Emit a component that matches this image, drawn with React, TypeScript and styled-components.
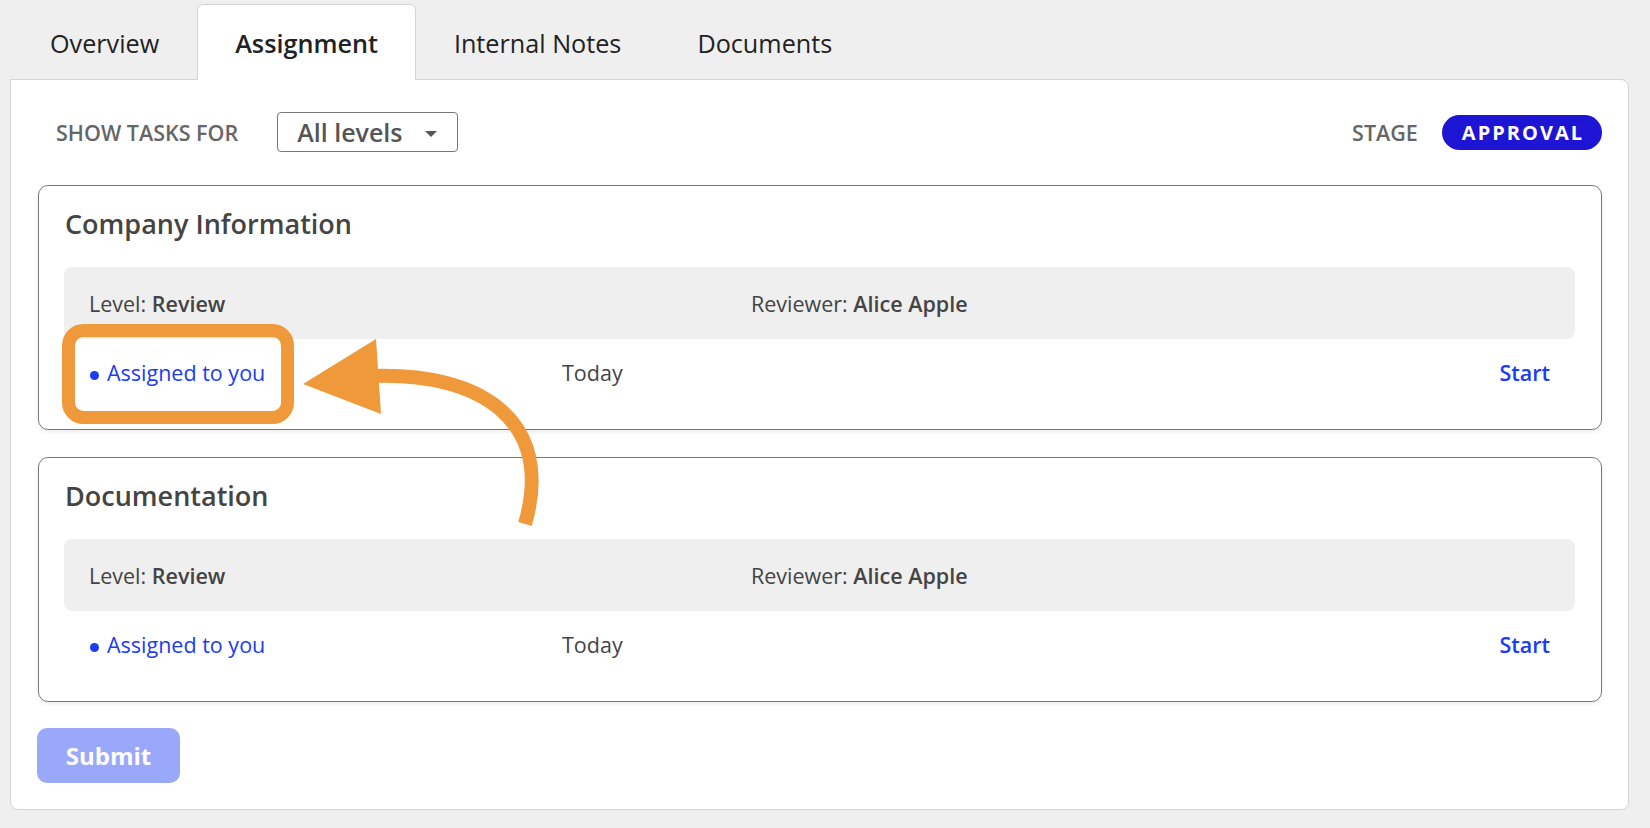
import React from "react";
import styled, { createGlobalStyle } from "styled-components";

const Global = createGlobalStyle`
  html, body { margin: 0; padding: 0; background: #efefef; }
  body { font-family: "Open Sans", "Noto Sans", sans-serif; color: #444; }
  * { box-sizing: border-box; }
`;

const Page = styled.div`
  position: relative;
  width: 1650px;
  height: 828px;
  padding: 4px 21px 19px 10px;
  display: flex;
  flex-direction: column;
`;

const TabBar = styled.div`
  display: flex;
  padding-left: 2px;
  margin-bottom: -1px;
  position: relative;
  z-index: 1;
`;

const Tab = styled.div<{ $active?: boolean }>`
  height: 76px;
  padding: 0 37px;
  display: flex;
  align-items: center;
  font-size: 25.2px;
  color: #222;
  font-weight: ${(p) => (p.$active ? 600 : 400)};
  background: ${(p) => (p.$active ? "#fff" : "transparent")};
  border: 1px solid ${(p) => (p.$active ? "#d4d4d4" : "transparent")};
  border-bottom: none;
  border-radius: 6px 6px 0 0;
`;

const Panel = styled.div`
  background: #fff;
  border: 1px solid #d4d4d4;
  border-radius: 0 8px 8px 8px;
  padding: 32px 26px 26px 27px;
  display: flex;
  flex-direction: column;
`;

const FilterRow = styled.div`
  display: flex;
  align-items: center;
  justify-content: space-between;
  height: 40px;
  padding-left: 18px;
`;

const FilterGroup = styled.div`
  display: flex;
  align-items: center;
  gap: 39px;
`;

const Label = styled.span`
  font-size: 21.5px;
  font-weight: 600;
  color: #666;
  text-transform: uppercase;
`;

const Select = styled.div`
  width: 181px;
  height: 40px;
  border: 1px solid #777;
  border-radius: 4px;
  display: flex;
  align-items: center;
  justify-content: space-between;
  padding: 0 20px 0 19px;
  font-size: 25px;
  font-weight: 600;
  color: #555;
`;

const Caret = styled.span`
  width: 0;
  height: 0;
  border-left: 6px solid transparent;
  border-right: 6px solid transparent;
  border-top: 6px solid #555;
  margin-top: 3px;
`;

const StageGroup = styled.div`
  display: flex;
  align-items: center;
  gap: 24px;
`;

const Pill = styled.span`
  height: 35px;
  padding: 0 18px 0 20px;
  border-radius: 18px;
  background: #1e14d4;
  color: #fff;
  font-size: 20px;
  font-weight: 700;
  letter-spacing: 2px;
  display: flex;
  align-items: center;
`;

const Card = styled.section<{ $gap: number }>`
  border: 1px solid #777;
  border-radius: 10px;
  padding: 20px 26px 22px 25px;
  margin-top: ${(p) => p.$gap}px;
  box-shadow: 0 2px 4px rgba(0, 0, 0, 0.08);
`;

const CardTitle = styled.h2`
  margin: 0 0 25px 1px;
  font-size: 27px;
  line-height: 36px;
  font-weight: 600;
  color: #444;
`;

const InfoBar = styled.div`
  height: 72px;
  background: #efefef;
  border-radius: 8px;
  padding: 0 25px;
  display: flex;
  align-items: center;
  font-size: 21.5px;
  color: #444;
`;

const InfoCell = styled.div<{ $w?: number }>`
  width: ${(p) => (p.$w ? `${p.$w}px` : "auto")};
  flex: ${(p) => (p.$w ? "none" : "1")};
  b { font-weight: 600; }
`;

const TaskRow = styled.div`
  padding: 22px 25px 22px 25px;
  display: flex;
  align-items: center;
  font-size: 21.5px;
  line-height: 24px;
`;

const Assigned = styled.div`
  width: 473px;
  display: flex;
  align-items: center;
  gap: 8px;
  color: #1a3cf5;
  &::before {
    content: "";
    width: 9px;
    height: 9px;
    border-radius: 50%;
    background: #1a3cf5;
    margin-left: 1px;
    margin-top: 4px;
  }
`;

const When = styled.div`
  flex: 1;
  color: #444;
`;

const StartLink = styled.span`
  color: #1a3cf5;
  font-weight: 600;
`;

const Submit = styled.button`
  margin: 26px 0 0 -1px;
  width: 143px;
  height: 55px;
  border: none;
  border-radius: 10px;
  background: #99a8f9;
  color: #fff;
  font-family: "Open Sans", "Noto Sans", sans-serif;
  font-size: 24px;
  font-weight: 700;
`;

const Overlay = styled.svg`
  position: absolute;
  left: 0;
  top: 0;
  pointer-events: none;
`;

const sections = ["Company Information", "Documentation"];

export default function App() {
  return (
    <>
      <Global />
      <Page>
        <TabBar>
          <Tab>Overview</Tab>
          <Tab $active>Assignment</Tab>
          <Tab>Internal Notes</Tab>
          <Tab>Documents</Tab>
        </TabBar>
        <Panel>
          <FilterRow>
            <FilterGroup>
              <Label>Show tasks for</Label>
              <Select>
                All levels
                <Caret />
              </Select>
            </FilterGroup>
            <StageGroup>
              <Label>Stage</Label>
              <Pill>APPROVAL</Pill>
            </StageGroup>
          </FilterRow>
          {sections.map((s, i) => (
            <Card key={s} $gap={i === 0 ? 33 : 27}>
              <CardTitle>{s}</CardTitle>
              <InfoBar>
                <InfoCell $w={662}>
                  Level: <b>Review</b>
                </InfoCell>
                <InfoCell>
                  Reviewer: <b>Alice Apple</b>
                </InfoCell>
              </InfoBar>
              <TaskRow>
                <Assigned>Assigned to you</Assigned>
                <When>Today</When>
                <StartLink>Start</StartLink>
              </TaskRow>
            </Card>
          ))}
          <Submit>Submit</Submit>
        </Panel>
        <Overlay width="1650" height="828" viewBox="0 0 1650 828">
          <rect x="68.5" y="330.5" width="219" height="87" rx="15" fill="none" stroke="#f0993a" strokeWidth="13" />
          <path d="M372 376 C480 372, 555 420, 525 524" fill="none" stroke="#f0993a" strokeWidth="14" />
          <polygon points="303,384 376,339 381,414" fill="#f0993a" />
        </Overlay>
      </Page>
    </>
  );
}
